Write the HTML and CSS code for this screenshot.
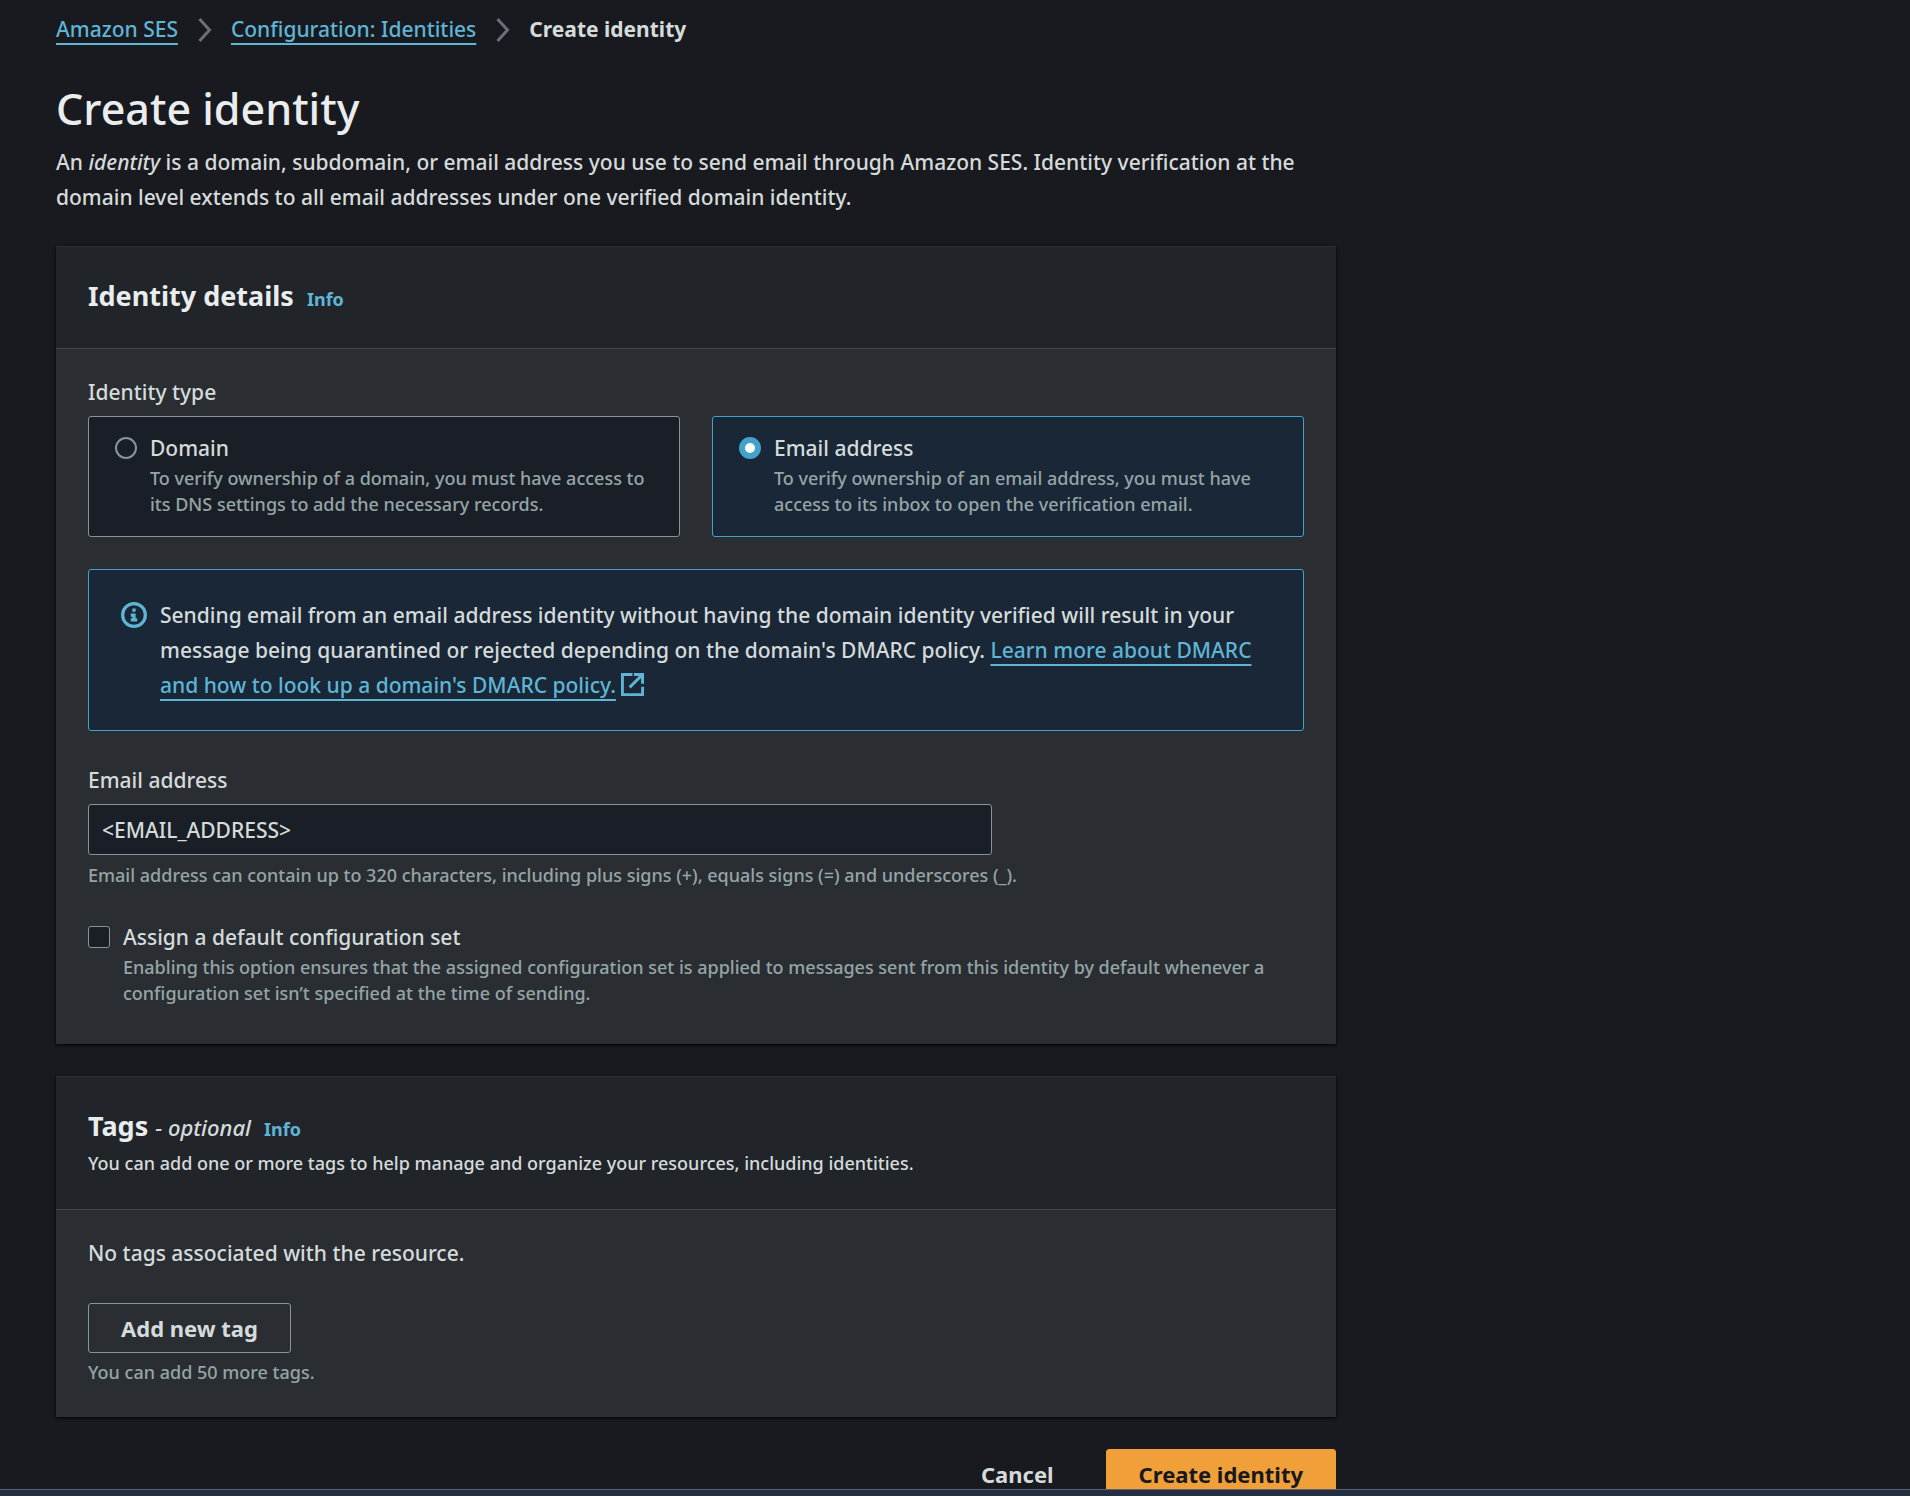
FILE: index.html
```html
<!DOCTYPE html>
<html lang="en">
<head>
<meta charset="utf-8">
<title>Create identity</title>
<link rel="stylesheet" href="styles.css">
</head>
<body>
<main class="page">
  <nav class="breadcrumb" aria-label="Breadcrumb">
    <a class="link" href="#ses">Amazon SES</a>
    <svg class="chevron" viewBox="0 0 14 26" aria-hidden="true"><path d="M2 2l10 11L2 24"/></svg>
    <a class="link" href="#identities">Configuration: Identities</a>
    <svg class="chevron" viewBox="0 0 14 26" aria-hidden="true"><path d="M2 2l10 11L2 24"/></svg>
    <span class="current">Create identity</span>
  </nav>

  <header class="intro">
    <h1>Create identity</h1>
    <p>An <em>identity</em> is a domain, subdomain, or email address you use to send email through Amazon SES. Identity verification at the domain level extends to all email addresses under one verified domain identity.</p>
  </header>

  <form class="form">
    <section class="panel">
      <div class="panel-head">
        <h2>Identity details</h2>
        <a class="info" href="#details-info">Info</a>
      </div>
      <div class="panel-body">
        <fieldset class="types">
          <legend>Identity type</legend>
          <div class="tiles">
            <label class="tile">
              <input class="radio" type="radio" name="type">
              <span class="option"><span class="name">Domain</span><span class="note">To verify ownership of a domain, you must have access to its DNS settings to add the necessary records.</span></span>
            </label>
            <label class="tile selected">
              <input class="radio" type="radio" name="type" checked>
              <span class="option"><span class="name">Email address</span><span class="note">To verify ownership of an email address, you must have access to its inbox to open the verification email.</span></span>
            </label>
          </div>
        </fieldset>

        <div class="alert">
          <svg class="info-icon" viewBox="0 0 16 16" aria-hidden="true"><circle cx="8" cy="8" r="7"/><path d="M8 11V8H6M10 11H6M8 4v2"/></svg>
          <p>Sending email from an email address identity without having the domain identity verified will result in your message being quarantined or rejected depending on the domain's DMARC policy. <a class="link" href="#dmarc">Learn more about DMARC and how to look up a domain's DMARC policy.</a> <svg class="external" viewBox="0 0 16 16" aria-hidden="true"><path d="M15 9.500V15H1V1h7M9 1h6v6.500M15 1L6 10"/></svg></p>
        </div>

        <div class="field">
          <label for="email">Email address</label>
          <input class="text" id="email" type="text" value="&lt;EMAIL_ADDRESS&gt;">
          <p class="note">Email address can contain up to 320 characters, including plus signs (+), equals signs (=) and underscores (_).</p>
        </div>

        <label class="check">
          <input class="box" type="checkbox">
          <span class="option"><span class="name">Assign a default configuration set</span><span class="note">Enabling this option ensures that the assigned configuration set is applied to messages sent from this identity by default whenever a configuration set isn’t specified at the time of sending.</span></span>
        </label>
      </div>
    </section>

    <section class="panel">
      <div class="panel-head">
        <h2>Tags <em>- optional</em></h2>
        <a class="info" href="#tags-info">Info</a>
        <p class="summary">You can add one or more tags to help manage and organize your resources, including identities.</p>
      </div>
      <div class="panel-body tags">
        <p>No tags associated with the resource.</p>
        <button class="button" type="button">Add new tag</button>
        <p class="note">You can add 50 more tags.</p>
      </div>
    </section>

    <div class="actions">
      <button class="button plain" type="button">Cancel</button>
      <button class="button primary" type="submit">Create identity</button>
    </div>
  </form>
</main>
<footer class="bar"></footer>
</body>
</html>
```

FILE: styles.css
```css
* {
  box-sizing: border-box;
}

body {
  margin: 0;
  height: 100vh;
  display: flex;
  flex-direction: column;
  background: #191a1f;
  color: #d5dbdb;
  font: 500 21px/35px "Noto Sans", sans-serif;
}

h1, h2, p, fieldset, legend {
  margin: 0;
  padding: 0;
  border: 0;
}

.page {
  flex: 1;
  min-height: 0;
  overflow: auto;
  scrollbar-width: none;
  padding: 12px 56px 32px;
}

.link {
  color: #5fb5d5;
  text-decoration: underline 2px;
  text-underline-offset: 6px;
}

.breadcrumb {
  display: flex;
  align-items: center;
  gap: 19px;
}

.chevron {
  width: 15px;
  height: 26px;
  fill: none;
  stroke: #687078;
  stroke-width: 3;
}

.current {
  font-weight: 700;
}

.intro {
  max-width: 1280px;
  padding: 34px 0 31px;
}

h1 {
  color: #eaeded;
  font-size: 43px;
  font-weight: 500;
  line-height: 56px;
  margin-bottom: 8px;
}

.form {
  max-width: 1280px;
  display: flex;
  flex-direction: column;
  gap: 32px;
}

.panel {
  background: #2a2e33;
  border-top: 1px solid #2b2f34;
  box-shadow: 0 1px 3px #000;
}

.panel-head {
  display: flex;
  flex-wrap: wrap;
  align-items: baseline;
  column-gap: 13px;
  padding: 30px 32px 34px;
  background: #21252a;
  border-bottom: 1px solid #414750;
}

h2 {
  color: #eaeded;
  font-size: 27px;
  font-weight: 700;
  line-height: 37px;
}

h2 em {
  color: #d5dbdb;
  font-size: 22px;
  font-weight: 500;
}

.info {
  color: #5fb5d5;
  font-size: 18px;
  font-weight: 700;
  line-height: 24px;
  text-decoration: none;
}

.summary {
  flex-basis: 100%;
  font-size: 18px;
  line-height: 24px;
  margin-top: 5px;
}

.panel-body {
  display: flex;
  flex-direction: column;
  gap: 32px;
  padding: 26px 32px 38px;
}

legend {
  margin-bottom: 6px;
}

.tiles {
  display: grid;
  grid-template-columns: 1fr 1fr;
  gap: 32px;
}

.tile {
  display: flex;
  gap: 13px;
  padding: 14px 26px 19px;
  background: #1a1f27;
  border: 1px solid #879596;
  border-radius: 3px;
}

.selected {
  background: #192737;
  border-color: #44a1c9;
}

.option {
  flex: 1;
  display: flex;
  flex-direction: column;
}

.name {
  line-height: 34px;
}

.note {
  color: #95a5a6;
  font-size: 18px;
  line-height: 26px;
}

.radio, .box {
  appearance: none;
  flex: none;
  width: 22px;
  height: 22px;
  margin: 6px 0 0;
  background: #1a1f27;
  border: 2px solid #879596;
}

.radio {
  border-radius: 50%;
}

.radio:checked {
  background: #fff;
  border: 6px solid #44a1c9;
}

.box {
  border-width: 1px;
  border-radius: 3px;
}

.alert {
  display: flex;
  gap: 13px;
  padding: 28px 32px 27px;
  background: #192737;
  border: 1px solid #44a1c9;
  border-radius: 3px;
}

.info-icon {
  flex: none;
  width: 26px;
  height: 26px;
  margin-top: 4px;
  fill: none;
  stroke: #5fb5d5;
  stroke-width: 2;
}

.external {
  width: 23px;
  height: 23px;
  vertical-align: -3px;
  fill: none;
  stroke: #5fb5d5;
  stroke-width: 2;
}

.field {
  display: flex;
  flex-direction: column;
}

.text {
  width: 100%;
  max-width: 904px;
  height: 51px;
  margin: 6px 0 7px;
  padding: 0 13px;
  color: inherit;
  font: inherit;
  background: #1a1f27;
  border: 1px solid #879596;
  border-radius: 3px;
}

.check {
  display: flex;
  gap: 13px;
}

.tags {
  gap: 0;
  padding-bottom: 32px;
}

.button {
  align-self: flex-start;
  height: 50px;
  padding: 0 32px;
  color: #d5dbdb;
  font: inherit;
  font-size: 22px;
  font-weight: 700;
  background: transparent;
  border: 1px solid #879596;
  border-radius: 3px;
}

.tags .button {
  margin: 32px 0 6px;
}

.actions {
  display: flex;
  justify-content: flex-end;
  gap: 19px;
}

.plain {
  border-color: transparent;
}

.primary {
  color: #16191f;
  background: #f19f38;
  border-color: #f19f38;
}

.bar {
  flex: none;
  height: 7px;
  background: #232f3e;
  border-top: 1px solid #5d626b;
}
```
